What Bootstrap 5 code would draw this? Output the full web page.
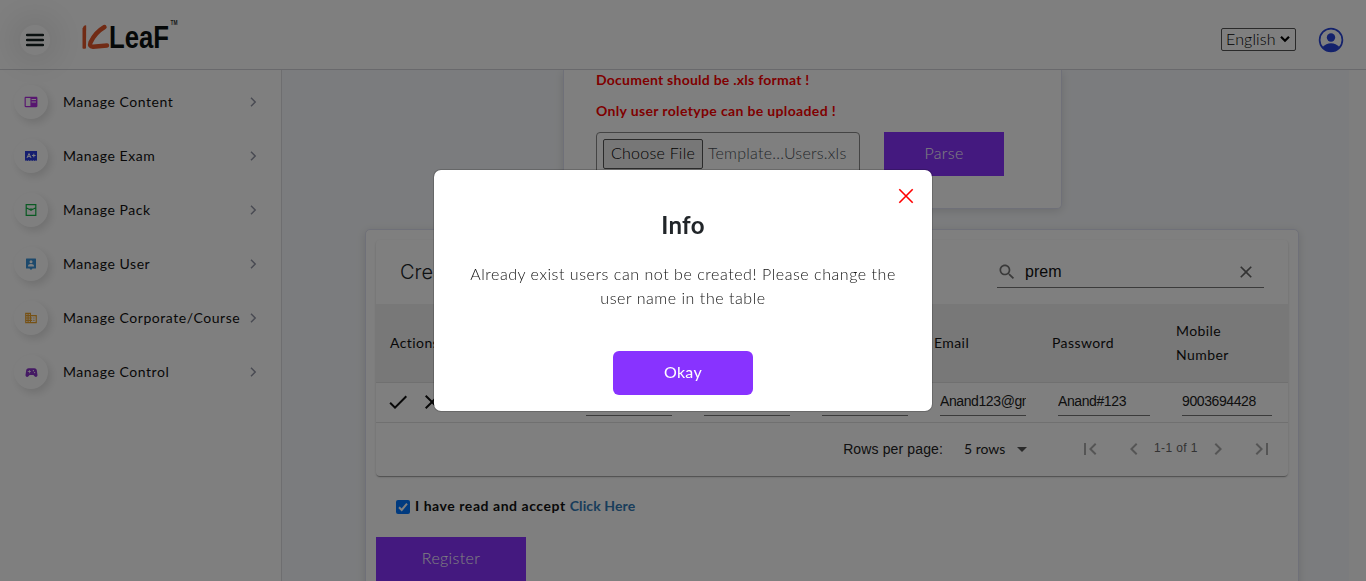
<!DOCTYPE html>
<html lang="en">
<head>
<meta charset="utf-8">
<meta name="viewport" content="width=device-width, initial-scale=1">
<title>KLeaF</title>
<link rel="stylesheet" href="https://cdn.jsdelivr.net/npm/bootstrap@5.3.0/dist/css/bootstrap.min.css">
<style>
  html, body { height: 100%; overflow: hidden; }
  body { font-family: Lato, "Noto Sans", sans-serif; color: #212529; font-size: 16px; letter-spacing: .35px; background: #fff; }
  .app { height: 100vh; }
  .topbar { height: 70px; border-bottom: 1px solid #d2d3d8; padding: 11px 22px 0 20px; flex: none; }
  .menu-btn { width: 30px; height: 30px; border-radius: 50%; background: #fff; box-shadow: 0 0 36px 6px rgba(0,0,0,.13); border: 0; }
  .logo { margin: -13px 0 0 30px; letter-spacing: 0; }
  .lang { width: 75px; height: 23px; border: 1px solid #555; border-radius: 2px; font-weight: 300; color: #000; padding: 0 0 2px 4px; white-space: nowrap; letter-spacing: .15px; margin-top: -1px; }
  .side { width: 282px; border-right: 1px solid #dcdde0; padding-top: 5px; flex: none; }
  .side-item { height: 54px; padding: 0 20px 0 14px; font-size: 14px; color: #111; letter-spacing: .55px; text-decoration: none; }
  .side-label { padding-bottom: 2px; white-space: nowrap; }
  .side-icon { width: 34px; height: 34px; border-radius: 50%; background: #fff; box-shadow: 3px 4px 9px rgba(0,0,0,.12); margin-right: 15px; flex: none; }
  .main { background: #f7f9fc; overflow: hidden; }
  .gutter { width: 17px; background: #fcfcfc; flex: none; }
  .panel { background: #fff; border: 1px solid #dfe1f0; border-radius: 5px; box-shadow: 0 2px 10px rgba(0,0,0,.13); }
  .upload { width: 499px; height: 139px; border-top: 0; border-radius: 0 0 5px 5px; padding: 0 0 0 32px; margin: 0 auto 20px 281px; }
  .warn { color: #f00; font-size: 14px; font-weight: 700; line-height: 21px; letter-spacing: .3px; position: relative; top: -1px; }
  .file-box { width: 264px; height: 46px; border: 1px solid #888; border-radius: 4px; padding: 6px; font-weight: 300; color: #495057; white-space: nowrap; letter-spacing: .25px; }
  .file-btn { width: 100px; height: 30px; border: 1px solid #555; border-radius: 2px; background: #efefef; color: #000; line-height: 26px; text-align: center; margin-right: 5px; }
  .btn-violet { background: #8833ff; color: #fff; font-weight: 300; border: 0; border-radius: 0; height: 44px; letter-spacing: .35px; padding: 4px 12px 6px; }
  .users { width: 934px; height: 380px; margin-left: 83px; padding: 10px; }
  .paper { width: 912px; height: 236px; border-radius: 4px; background: #fff; box-shadow: 0 2px 1px -1px rgba(0,0,0,.2), 0 1px 1px rgba(0,0,0,.14), 0 1px 3px rgba(0,0,0,.12); }
  .tools { height: 64px; padding: 0 24px; }
  .find { width: 267px; height: 32px; border-bottom: 1px solid #777; font: 16px/20px "Liberation Sans", sans-serif; color: #111; letter-spacing: 0; }
  .grid-row { display: grid; grid-template-columns: 204px 118px 118px 118px 118px 124px 112px; }
  .grid-head { height: 79px; background: #f1f1f1; border-bottom: 1px solid #e0e0e0; font-size: 14px; line-height: 24px; color: #111; align-items: center; letter-spacing: .42px; }
  .grid-body { height: 40px; border-bottom: 1px solid #e0e0e0; }
  .cell-input { width: 86px; height: 26px; margin: 7px 0 0 6px; border: 0; border-bottom: 1px solid #777; border-radius: 0; padding: 1px 0 4px; background: transparent; font: 14px/20px "Liberation Sans", sans-serif; color: #212121; letter-spacing: -.4px; overflow: hidden; white-space: nowrap; }
  .pager { height: 52px; font-size: 14px; color: #222; padding-right: 14px; }
  .arial { font-family: "Liberation Sans", sans-serif; letter-spacing: .13px; }
  .agree { font-size: 14px; font-weight: 700; margin: 20px 0 20px 20px; line-height: 21px; color: #111; letter-spacing: .55px; }
  .agree-text { position: relative; top: -1px; }
  .tick { width: 14px; height: 14px; border-radius: 2px; background: #0075ff; margin-right: 5px; }
  .notice { width: 500px; max-width: 500px; margin: 169px auto 0; }
  .notice .modal-content { height: 243px; border-radius: 8px; }
  .shut { position: absolute; right: 14px; top: 14px; }
  .notice h2 { font-size: 24px; font-weight: 700; line-height: 29px; margin: 40px 0 0; }
  .notice p { font-weight: 300; line-height: 24px; margin: 23px 30px 0; letter-spacing: .55px; white-space: nowrap; color: #111; }
  .modal-backdrop.show { opacity: .5; }
  svg { display: block; flex: none; }
</style>
</head>
<body>
<div class="app d-flex flex-column">
  <header class="topbar d-flex align-items-center">
    <button class="menu-btn d-flex align-items-center justify-content-center p-0" aria-label="Menu">
      <svg width="18" height="14" viewBox="0 0 18 14"><path d="M1 2h16M1 7h16M1 12h16" stroke="#142020" stroke-width="2.4" stroke-linecap="round"/></svg>
    </button>
    <svg class="logo" width="100" height="34" viewBox="80 17 100 34">
      <path d="M82.500 28.500Q84 24.500 86.200 25.500L86 48.200Q84 49.200 82.500 48.200Z" fill="#e2572b"/>
      <path d="M104.500 27Q95 32.500 90.500 42.500Q89 46.800 93 46.700L107 45.500" fill="none" stroke="#e2572b" stroke-width="4.400" stroke-linecap="round" stroke-linejoin="round"/>
      <text x="109" y="48" font-family="Liberation Sans" font-weight="700" font-size="32" textLength="60" lengthAdjust="spacingAndGlyphs" fill="#0b1010">LeaF</text>
      <text x="170.500" y="24.500" font-family="Liberation Sans" font-weight="700" font-size="6.500" textLength="7" lengthAdjust="spacingAndGlyphs" fill="#333">TM</text>
    </svg>
    <div class="lang d-flex align-items-center ms-auto">English
      <svg class="ms-1" width="10" height="8" viewBox="0 0 10 8"><path d="M1 1.800L5 5.800L9 1.800" fill="none" stroke="#000" stroke-width="2.200"/></svg>
    </div>
    <svg style="margin-left:22px" width="26" height="26" viewBox="0 0 26 26"><circle cx="13" cy="13" r="11.400" fill="none" stroke="#2945d8" stroke-width="1.700"/><circle cx="13" cy="10.500" r="4.200" fill="#2945d8"/><path d="M4.500 20Q8 16.200 13 16.200T21.500 20Q18 24.500 13 24.500T4.500 20Z" fill="#2945d8"/></svg>
  </header>

  <div class="d-flex flex-grow-1 overflow-hidden">
    <nav class="side d-flex flex-column">
      <a class="side-item d-flex align-items-center"><span class="side-icon d-flex align-items-center justify-content-center"><svg width="14" height="14" viewBox="0 0 24 24" fill="#b02ce0"><path d="M21 3H3C1.900 3 1 3.900 1 5v14c0 1.100.9 2 2 2h18c1.100 0 2-.9 2-2V5c0-1.100-.9-2-2-2zm-10 16H3V5h8v14zM13 7h7.500v1.700H13zm0 4h7.500v1.700H13z" fill-rule="evenodd"/></svg></span><span class="side-label">Manage Content</span><svg class="ms-auto" width="16" height="16" viewBox="0 0 16 16"><path d="M6 3.800L10.200 8L6 12.200" fill="none" stroke="#9295a5" stroke-width="1.500"/></svg></a>
      <a class="side-item d-flex align-items-center"><span class="side-icon d-flex align-items-center justify-content-center"><svg width="12" height="12" viewBox="0 0 12 12"><path d="M0 1h12v10l-1-.8-1.300.8-1.200-.8-1.300.8L6 10.200l-1.200.8-1.300-.8-1.200.8L1 10.200 0 11z" fill="#2a3ce0"/><path d="M2 8L4 3.500 6 8M2.800 6.600h2.400M7 5.500h3.600M8.800 3.700v3.600" stroke="#fff" fill="none"/></svg></span><span class="side-label">Manage Exam</span><svg class="ms-auto" width="16" height="16" viewBox="0 0 16 16"><path d="M6 3.800L10.200 8L6 12.200" fill="none" stroke="#9295a5" stroke-width="1.500"/></svg></a>
      <a class="side-item d-flex align-items-center"><span class="side-icon d-flex align-items-center justify-content-center"><svg width="12" height="12" viewBox="0 0 12 12"><path d="M1.200.6h9.600v10.800H1.200zM1.200 3.800L4.500 5.500h3L10.800 3.800" fill="none" stroke="#14b447" stroke-width="1.200"/><path d="M4.500 4.500h3v1.400L6 7 4.500 5.900z" fill="#14b447"/></svg></span><span class="side-label">Manage Pack</span><svg class="ms-auto" width="16" height="16" viewBox="0 0 16 16"><path d="M6 3.800L10.200 8L6 12.200" fill="none" stroke="#9295a5" stroke-width="1.500"/></svg></a>
      <a class="side-item d-flex align-items-center"><span class="side-icon d-flex align-items-center justify-content-center"><svg width="12" height="13" viewBox="0 0 12 13"><path d="M1.500.5h9q.5 0 .5.500v9q0 .5-.5.500H7.500L6 12 4.500 10.500h-3Q1 10.500 1 10V1q0-.5.500-.5z" fill="#3a92d8"/><circle cx="6" cy="3.700" r="1.500" fill="#fff"/><path d="M3 8.500q0-2.400 3-2.400t3 2.400z" fill="#fff"/></svg></span><span class="side-label">Manage User</span><svg class="ms-auto" width="16" height="16" viewBox="0 0 16 16"><path d="M6 3.800L10.200 8L6 12.200" fill="none" stroke="#9295a5" stroke-width="1.500"/></svg></a>
      <a class="side-item d-flex align-items-center"><span class="side-icon d-flex align-items-center justify-content-center"><svg width="14" height="14" viewBox="0 0 24 24" fill="#eda32a"><path d="M12 7V3H2v18h20V7H12zM6 19H4v-2h2v2zm0-4H4v-2h2v2zm0-4H4V9h2v2zm0-4H4V5h2v2zm4 12H8v-2h2v2zm0-4H8v-2h2v2zm0-4H8V9h2v2zm0-4H8V5h2v2zm10 12h-8v-2h2v-2h-2v-2h2v-2h-2V9h8v10zm-2-8h-2v2h2v-2zm0 4h-2v2h2v-2z"/></svg></span><span class="side-label">Manage Corporate/Course</span><svg class="ms-auto" width="16" height="16" viewBox="0 0 16 16"><path d="M6 3.800L10.200 8L6 12.200" fill="none" stroke="#9295a5" stroke-width="1.500"/></svg></a>
      <a class="side-item d-flex align-items-center"><span class="side-icon d-flex align-items-center justify-content-center"><svg width="15" height="15" viewBox="0 0 24 24" fill="#8a35c8"><path d="m21.580 16.090-1.090-7.660C20.210 6.460 18.520 5 16.530 5H7.470C5.480 5 3.790 6.460 3.510 8.430l-1.090 7.660C2.200 17.630 3.390 19 4.940 19c.68 0 1.320-.27 1.800-.75L9 16h6l2.250 2.250c.48.48 1.130.75 1.800.75 1.560 0 2.750-1.370 2.530-2.910zM11 11H9v2H8v-2H6v-1h2V8h1v2h2v1zm4-1c-.55 0-1-.45-1-1s.45-1 1-1 1 .45 1 1-.45 1-1 1zm2 3c-.55 0-1-.45-1-1s.45-1 1-1 1 .45 1 1-.45 1-1 1z"/></svg></span><span class="side-label">Manage Control</span><svg class="ms-auto" width="16" height="16" viewBox="0 0 16 16"><path d="M6 3.800L10.200 8L6 12.200" fill="none" stroke="#9295a5" stroke-width="1.500"/></svg></a>
    </nav>

    <main class="main flex-grow-1">
      <section class="panel upload">
        <div class="warn" style="letter-spacing:.25px">Document should be .xls format !</div>
        <div class="warn" style="margin-top:10px;letter-spacing:.35px">Only user roletype can be uploaded !</div>
        <div class="d-flex" style="margin-top:10px">
          <div class="file-box d-flex"><span class="file-btn">Choose File</span><span style="line-height:28px">Template...Users.xls</span></div>
          <button class="btn btn-violet" style="width:120px;margin-left:24px">Parse</button>
        </div>
      </section>

      <section class="panel users">
        <div class="paper">
          <div class="tools d-flex align-items-center justify-content-between">
            <span style="font:300 20px/24px Inter,sans-serif;letter-spacing:0">Create</span>
            <div class="find d-flex align-items-center">
              <svg width="20" height="20" viewBox="0 0 24 24" fill="#757575"><path d="M15.500 14h-.79l-.28-.27C15.410 12.590 16 11.110 16 9.500 16 5.910 13.090 3 9.500 3S3 5.910 3 9.500 5.910 16 9.500 16c1.610 0 3.090-.59 4.230-1.570l.27.28v.79l5 4.990L20.490 19l-4.990-5zm-6 0C7.010 14 5 11.990 5 9.500S7.010 5 9.500 5 14 7.010 14 9.500 11.990 14 9.500 14z"/></svg>
              <span style="margin-left:8px">prem</span>
              <svg class="ms-auto" style="margin-right:8px" width="20" height="20" viewBox="0 0 24 24" fill="#666"><path d="M19 6.410 17.590 5 12 10.590 6.410 5 5 6.410 10.590 12 5 17.590 6.410 19 12 13.410 17.590 19 19 17.590 13.410 12z"/></svg>
            </div>
          </div>
          <div class="grid-row grid-head"><span style="padding-left:14px">Actions</span><span></span><span></span><span></span><span>Email</span><span>Password</span><span>Mobile<br>Number</span></div>
          <div class="grid-row grid-body">
            <div class="d-flex align-items-center" style="padding:0 0 2px 10px;gap:8px">
              <svg width="24" height="24" viewBox="0 0 24 24" fill="#111"><path d="M9 16.170 4.830 12l-1.420 1.410L9 19 21 7l-1.410-1.410z"/></svg>
              <svg style="margin-left:2px" width="24" height="24" viewBox="0 0 24 24" fill="#111"><path d="M19 6.410 17.590 5 12 10.590 6.410 5 5 6.410 10.590 12 5 17.590 6.410 19 12 13.410 17.590 19 19 17.590 13.410 12z"/></svg>
            </div>
            <div class="cell-input"></div><div class="cell-input"></div><div class="cell-input"></div>
            <div class="cell-input">Anand123@gmail</div>
            <div class="cell-input" style="width:92px">Anand#123</div>
            <div class="cell-input" style="width:90px">9003694428</div>
          </div>
          <div class="pager d-flex align-items-center justify-content-end">
            <span class="arial">Rows per page:</span>
            <span style="margin:0 0 1px 21px;width:43px;white-space:nowrap;letter-spacing:0">5 rows</span>
            <svg style="margin-left:3px" width="24" height="24" viewBox="0 0 24 24" fill="#555"><path d="m7 10 5 5 5-5z"/></svg>
            <svg style="margin-left:44px" width="24" height="24" viewBox="0 0 24 24" fill="#aaa"><path d="M18.410 16.590 13.820 12l4.590-4.590L17 6l-6 6 6 6zM6 6h2v12H6z"/></svg>
            <svg style="margin-left:20px" width="24" height="24" viewBox="0 0 24 24" fill="#aaa"><path d="M15.410 7.410 14 6l-6 6 6 6 1.410-1.410L10.830 12z"/></svg>
            <span class="arial text-nowrap" style="font-size:12px;width:44px;margin:0 8px 3px;color:#666;letter-spacing:.4px">1-1 of 1</span>
            <svg width="24" height="24" viewBox="0 0 24 24" fill="#aaa"><path d="M10 6 8.590 7.410 13.170 12l-4.580 4.590L10 18l6-6z"/></svg>
            <svg style="margin-left:20px" width="24" height="24" viewBox="0 0 24 24" fill="#aaa"><path d="M5.590 7.410 10.180 12l-4.590 4.590L7 18l6-6-6-6zM16 6h2v12h-2z"/></svg>
          </div>
        </div>
        <div class="agree d-flex align-items-center"><span class="tick"><svg width="14" height="14" viewBox="0 0 14 14"><path d="M3 7.300L5.700 10L11 3.700" fill="none" stroke="#fff" stroke-width="2"/></svg></span><span class="agree-text">I have read and accept <span style="color:#337ab7;letter-spacing:.12px">Click Here</span></span></div>
        <button class="btn btn-violet" style="width:150px">Register</button>
      </section>
    </main>
    <div class="gutter"></div>
  </div>
</div>

<div class="modal-backdrop show"></div>
<div class="modal d-block overflow-hidden" tabindex="-1" role="dialog">
  <div class="modal-dialog notice">
    <div class="modal-content text-center">
      <svg class="shut" width="24" height="24" viewBox="0 0 24 24"><path d="M5.300 5.300l13.400 13.400M18.700 5.300L5.300 18.700" stroke="#f00" stroke-width="1.600"/></svg>
      <h2>Info</h2>
      <p>Already exist users can not be created! Please change the<br>user name in the table</p>
      <button class="btn btn-violet mx-auto" style="width:140px;margin-top:41px;border-radius:6px;font-weight:400">Okay</button>
    </div>
  </div>
</div>
<script src="https://cdn.jsdelivr.net/npm/bootstrap@5.3.0/dist/js/bootstrap.bundle.min.js"></script>
</body>
</html>
